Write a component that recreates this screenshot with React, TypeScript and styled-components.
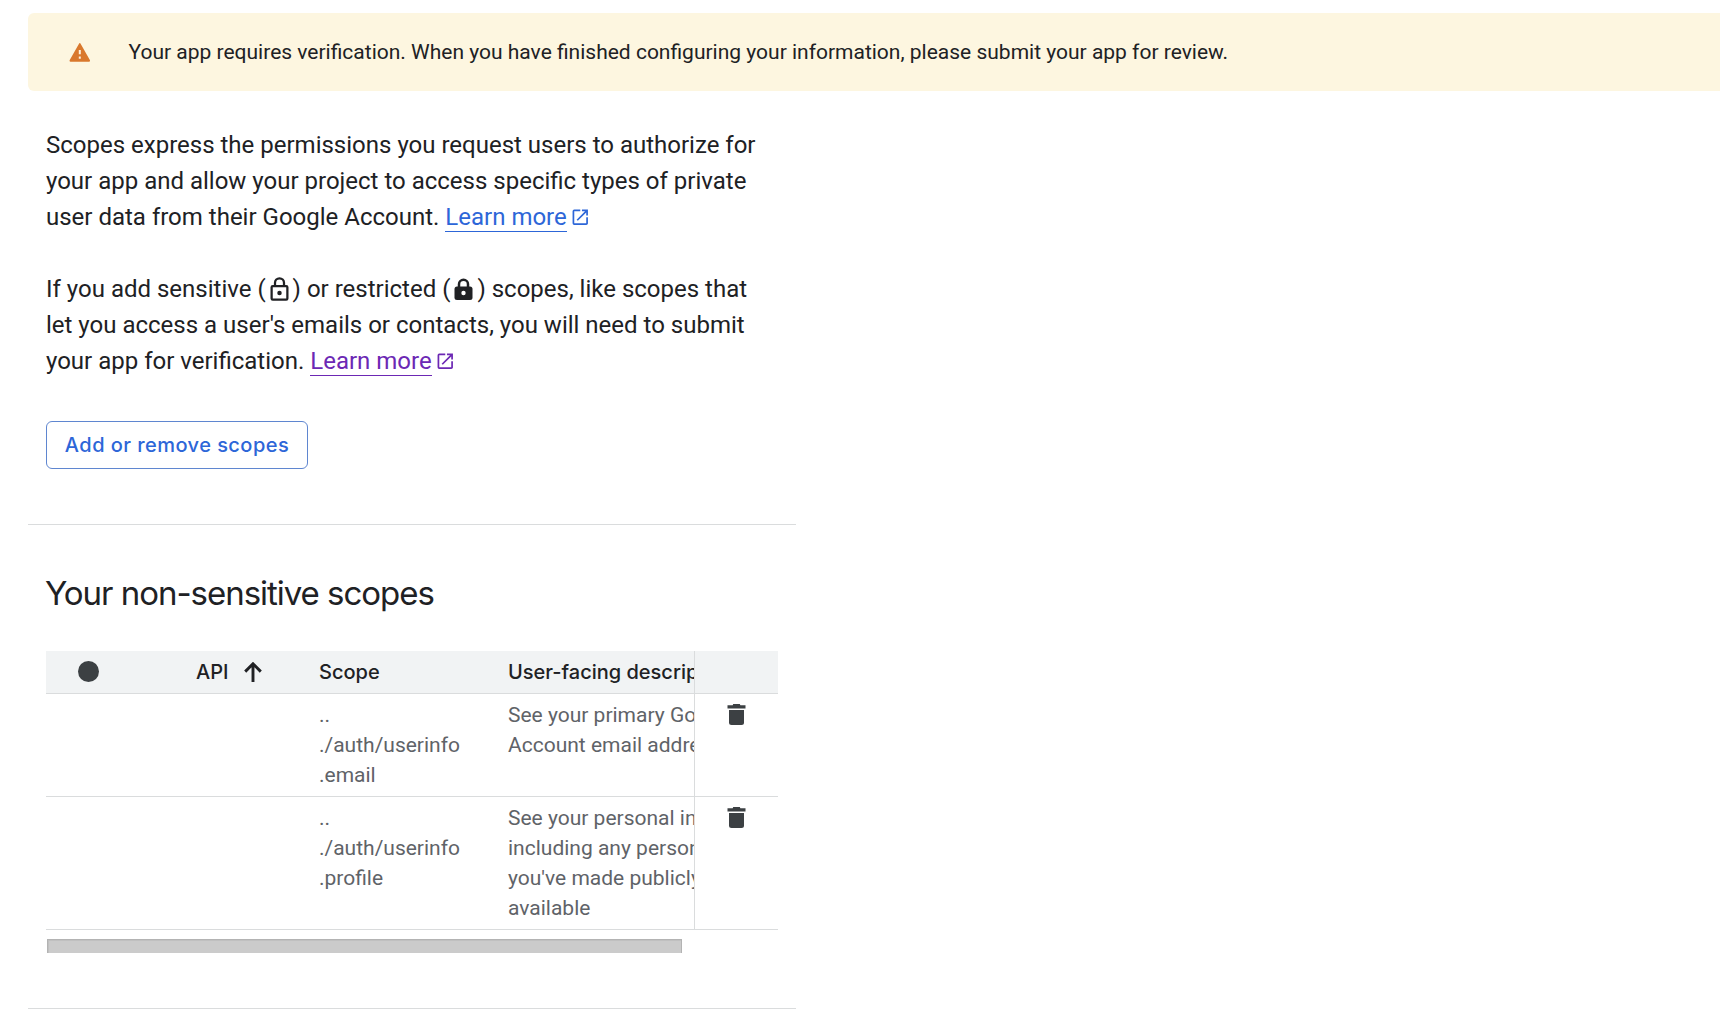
import React from "react";
import styled, { createGlobalStyle } from "styled-components";
import { MdOpenInNew } from "react-icons/md";

const ink = "#202124";
const rule = "#dadcdd";
const body = `Roboto, "Liberation Sans", sans-serif`;
const display = `Inter, "Liberation Sans", sans-serif`;

const GlobalStyle = createGlobalStyle`
  * { box-sizing: border-box; }
  html, body { margin: 0; background: #fff; }
  body { overflow: hidden; color: ${ink}; font-family: ${body}; }
`;

const Page = styled.main`
  padding: 13px 0 0 28px;
  height: 1016px;
  overflow: hidden;
`;

const Banner = styled.div`
  display: flex;
  align-items: center;
  height: 78px;
  padding-left: 41px;
  border-radius: 6px 0 0 6px;
  background: #fdf6e0;
`;

const BannerText = styled.p`
  margin: 0 0 0 37.5px;
  font-size: 21px;
  line-height: 30px;
  white-space: nowrap;
`;

const Panel = styled.section<{ $top: number; $bottom: number }>`
  width: 768px;
  padding: ${(p) => p.$top}px 18px ${(p) => p.$bottom}px;
  border-bottom: 1px solid ${rule};
`;

const Paragraph = styled.p`
  margin: 0 0 36px;
  font-size: 24px;
  line-height: 36px;
  white-space: nowrap;
`;

const Line = styled.span`
  display: block;
  height: 36px;
`;

const Link = styled.a<{ $visited?: boolean }>`
  color: ${(p) => (p.$visited ? "#6c28b4" : "#2d66d8")};
  text-decoration: none;
  svg {
    width: 20.5px;
    height: 20.5px;
    margin-left: 3px;
    vertical-align: -2px;
  }
`;

const LinkLabel = styled.span`
  border-bottom: 1px solid currentColor;
`;

const InlineIcon = styled.svg`
  width: 27px;
  height: 27px;
  vertical-align: -6px;
`;

const Button = styled.button`
  display: block;
  width: 262px;
  height: 48px;
  margin-top: 42px;
  padding: 0;
  border: 1px solid #5f86d0;
  border-radius: 6px;
  background: #fff;
  color: #2d66d8;
  font: 500 20px/46px ${display};
  letter-spacing: 0.45px;
  white-space: nowrap;
`;

const Heading = styled.h2`
  margin: 0 0 34px -1px;
  font: 400 33px/48px ${display};
  letter-spacing: -1.03px;
  white-space: nowrap;
`;

const Row = styled.div<{ $head?: boolean }>`
  display: flex;
  border-bottom: 1px solid ${rule};
  background: ${(p) => (p.$head ? "#f1f3f4" : "#fff")};
  color: ${(p) => (p.$head ? ink : "#5f6368")};
  font: ${(p) => (p.$head ? `500 20px/30px ${display}` : `400 21px/30px ${body}`)};
`;

const Cells = styled.div`
  display: grid;
  grid-template-columns: 150px 123px 189px 280px;
  width: 648px;
  padding: 6px 0;
  overflow: hidden;
`;

const Cell = styled.div<{ $indent?: number }>`
  display: flex;
  align-items: center;
  gap: 15.5px;
  padding-left: ${(p) => p.$indent ?? 0}px;
  white-space: pre;
`;

const TextCell = styled(Cell)`
  display: block;
`;

const ActionCell = styled.div`
  width: 84px;
  padding: 10px 0 0 32px;
  border-left: 1px solid ${rule};
`;

const Dot = styled.span`
  width: 21px;
  height: 21px;
  margin-bottom: 1px;
  border-radius: 50%;
  background: #3c4043;
`;

const Thumb = styled.div`
  width: 635px;
  height: 14px;
  margin: 9px 0 0 1px;
  border: solid #b3b3b3;
  border-width: 1px 1px 0 1px;
  background: #cbcbcb;
  box-shadow: inset 1px 1px 0 #c0c0c0;
`;

const ArrowSvg = styled.svg`
  width: 18px;
  height: 20px;
  margin-bottom: 1px;
`;

const WarningIcon = () => (
  <svg width="22" height="19" viewBox="0 0 22 19">
    <path d="M10.900 0Q11.300 .2 11.600 .8L21 17.200Q21.300 18.500 20.200 18.800H1.400Q.2 18.500 .6 17.200L10 .8Q10.300 .2 10.900 0Z" fill="#d9782d" />
    <path d="M10.800 7v4.200M10.800 13.400v2.300" stroke="#fdf0dc" strokeWidth="2" />
  </svg>
);

const LockOutline = () => (
  <InlineIcon viewBox="0 0 24 24" fill="none" stroke={ink} strokeWidth="2">
    <rect x="5" y="9" width="14" height="12" rx="1" />
    <path d="M8 9V6a4 4 0 0 1 8 0v3" />
    <circle cx="12" cy="15" r="2" fill={ink} stroke="none" />
  </InlineIcon>
);

const LockFilled = () => (
  <InlineIcon viewBox="0 0 27 27">
    <rect x="4.5" y="10.5" width="18" height="13.5" rx="2.5" fill={ink} />
    <path d="M9 11V8.2a4.5 4.5 0 0 1 9 0V11" fill="none" stroke={ink} strokeWidth="2.5" />
    <circle cx="13.5" cy="17" r="2.2" fill="#fff" />
  </InlineIcon>
);

const SortArrow = () => (
  <ArrowSvg viewBox="0 0 18 20">
    <path d="M9 20V2M1.2 9.6 9 1.8l7.8 7.8" fill="none" stroke={ink} strokeWidth="2.9" />
  </ArrowSvg>
);

const TrashIcon = () => (
  <svg width="19" height="21" viewBox="0 0 19 21" fill="#3c4043" display="block">
    <path d="M.5 1.300h5.200L6.200 0h6.600l.6 1.300h5.100v3.200H.5z" />
    <path d="M2 6h15v12.500Q17 21 14.500 21h-10Q2 21 2 18.500z" />
  </svg>
);

const scopes = [
  {
    scope: "..\n./auth/userinfo\n.email",
    description: "See your primary Google\nAccount email address",
  },
  {
    scope: "..\n./auth/userinfo\n.profile",
    description:
      "See your personal info,\nincluding any personal info\nyou've made publicly\navailable",
  },
];

export default function App() {
  return (
    <Page>
      <GlobalStyle />
      <Banner>
        <WarningIcon />
        <BannerText>
          Your app requires verification. When you have finished configuring your
          information, please submit your app for review.
        </BannerText>
      </Banner>
      <Panel $top={36} $bottom={55}>
        <Paragraph>
          <Line>Scopes express the permissions you request users to authorize for</Line>
          <Line>your app and allow your project to access specific types of private</Line>
          <Line>
            user data from their Google Account.{" "}
            <Link>
              <LinkLabel>Learn more</LinkLabel>
              <MdOpenInNew />
            </Link>
          </Line>
        </Paragraph>
        <Paragraph>
          <Line>
            If you add sensitive (<LockOutline />) or restricted (<LockFilled />) scopes,
            like scopes that
          </Line>
          <Line>let you access a user's emails or contacts, you will need to submit</Line>
          <Line>
            your app for verification.{" "}
            <Link $visited>
              <LinkLabel>Learn more</LinkLabel>
              <MdOpenInNew />
            </Link>
          </Line>
        </Paragraph>
        <Button>Add or remove scopes</Button>
      </Panel>
      <Panel $top={44} $bottom={55}>
        <Heading>Your non-sensitive scopes</Heading>
        <Row $head>
          <Cells>
            <Cell $indent={32}>
              <Dot />
            </Cell>
            <Cell>
              API
              <SortArrow />
            </Cell>
            <Cell>Scope</Cell>
            <Cell>User-facing description</Cell>
          </Cells>
          <ActionCell />
        </Row>
        {scopes.map((s) => (
          <Row key={s.scope}>
            <Cells>
              <TextCell />
              <TextCell />
              <TextCell>{s.scope}</TextCell>
              <TextCell>{s.description}</TextCell>
            </Cells>
            <ActionCell>
              <TrashIcon />
            </ActionCell>
          </Row>
        ))}
        <Thumb />
      </Panel>
    </Page>
  );
}
